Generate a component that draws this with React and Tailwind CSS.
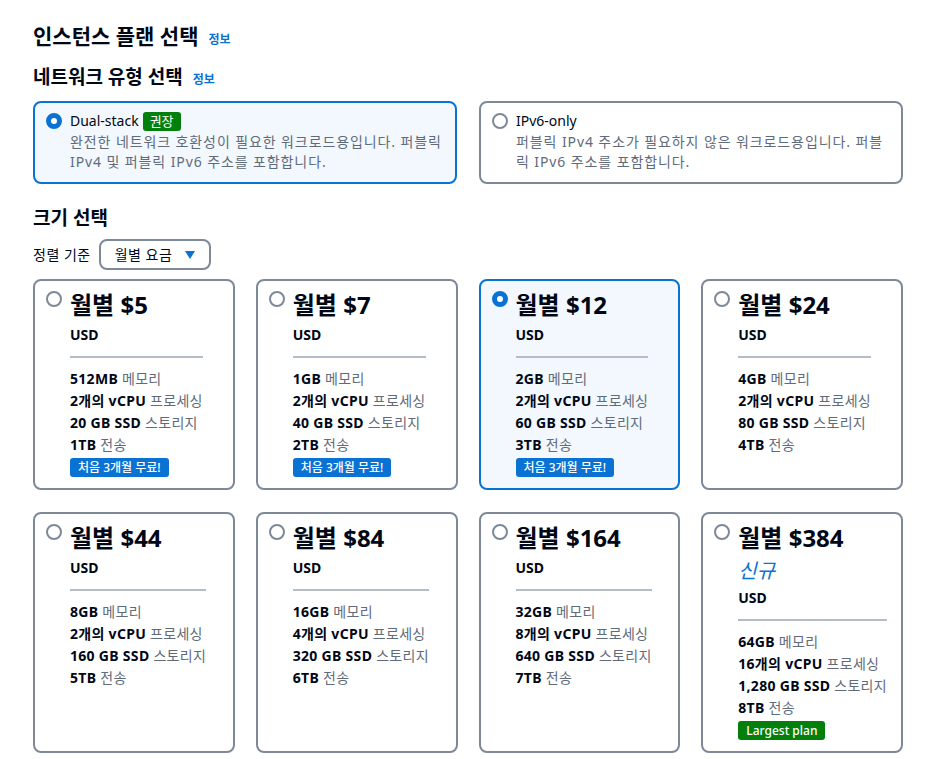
const plans = [
  { price: "$5", mem: "512MB", cpu: "2개의", ssd: "20 GB SSD", tx: "1TB", badge: "free" },
  { price: "$7", mem: "1GB", cpu: "2개의", ssd: "40 GB SSD", tx: "2TB", badge: "free" },
  { price: "$12", mem: "2GB", cpu: "2개의", ssd: "60 GB SSD", tx: "3TB", badge: "free", selected: true },
  { price: "$24", mem: "4GB", cpu: "2개의", ssd: "80 GB SSD", tx: "4TB" },
  { price: "$44", mem: "8GB", cpu: "2개의", ssd: "160 GB SSD", tx: "5TB" },
  { price: "$84", mem: "16GB", cpu: "4개의", ssd: "320 GB SSD", tx: "6TB" },
  { price: "$164", mem: "32GB", cpu: "8개의", ssd: "640 GB SSD", tx: "7TB" },
  { price: "$384", mem: "64GB", cpu: "16개의", ssd: "1,280 GB SSD", tx: "8TB", badge: "largest", isNew: true },
];

function Radio({ selected, className = "" }) {
  return (
    <span
      className={`block h-4 w-4 shrink-0 rounded-full bg-white ${
        selected ? "border-[5px] border-[#0972d3]" : "border-2 border-[#7d8998]"
      } ${className}`}
    />
  );
}

function InfoLink() {
  return <span className="ml-[10px] text-xs font-bold tracking-normal text-[#0972d3]">정보</span>;
}

function NetworkTile({ title, badge, selected, children }) {
  return (
    <div
      className={`flex rounded-lg border-2 pb-[10px] pl-[11px] pr-3 pt-[7px] ${
        selected ? "border-[#0972d3] bg-[#f2f8fd]" : "border-[#7d8998] bg-white"
      }`}
    >
      <Radio selected={selected} className="mt-[3px]" />
      <div className="ml-2">
        <div className="flex h-[22px] items-center gap-1 text-sm text-[#000716]">
          <span>{title}</span>
          {badge && (
            <span className="rounded-[3px] bg-[#037f0c] px-[7px] text-[13px] leading-[19px] text-white">
              {badge}
            </span>
          )}
        </div>
        <p className="whitespace-nowrap text-sm leading-5 tracking-[0.9px] text-[#5f6b7a]">{children}</p>
      </div>
    </div>
  );
}

function PlanCard({ p }) {
  return (
    <div
      className={`flex rounded-lg border-2 pb-[11px] pl-[11px] pr-2 pt-[8px] ${
        p.selected ? "border-[#0972d3] bg-[#f2f8fd]" : "border-[#7d8998] bg-white"
      }`}
    >
      <Radio selected={p.selected} className="mt-[2px]" />
      <div className="ml-2 w-fit">
        <div className="whitespace-nowrap text-[24px] font-bold leading-[32px] text-[#000716]">
          월별 {p.price}
        </div>
        {p.isNew && (
          <div className="mt-[3px] text-[20px] italic leading-[28px] text-[#0972d3]">신규</div>
        )}
        <div className={`${p.isNew ? "mt-[3px]" : "mt-1"} text-sm font-bold leading-5 text-[#000716]`}>
          USD
        </div>
        <div className="mt-[11px] h-[2px] bg-[#b4bdc7]" />
        <ul className="mt-[10px] whitespace-nowrap text-sm leading-[22px] tracking-[0.3px] text-[#5f6b7a]">
          <li>
            <b className="text-[#000716]">{p.mem}</b> 메모리
          </li>
          <li>
            <b className="text-[#000716]">{p.cpu} vCPU</b> 프로세싱
          </li>
          <li>
            <b className="text-[#000716]">{p.ssd}</b> 스토리지
          </li>
          <li>
            <b className="text-[#000716]">{p.tx}</b> 전송
          </li>
        </ul>
        {p.badge === "free" && (
          <div className="mt-[2px] w-fit whitespace-nowrap rounded-[3px] bg-[#0972d3] px-[8px] text-xs font-medium leading-[19px] text-white">
            처음 3개월 무료!
          </div>
        )}
        {p.badge === "largest" && (
          <div className="mt-[2px] w-fit whitespace-nowrap rounded-[3px] bg-[#037f0c] px-[8px] text-xs font-medium leading-[19px] text-white">
            Largest plan
          </div>
        )}
      </div>
    </div>
  );
}

export default function App() {
  return (
    <div className="min-h-[759px] w-[932px] bg-white pl-[33px] pr-[29px] pt-[24px] font-['Noto_Sans','Noto_Sans_CJK_KR',sans-serif] text-[#000716]">
      <h1 className="text-[21px] font-bold leading-6">
        인스턴스 플랜 선택
        <InfoLink />
      </h1>
      <h2 className="mt-[17px] text-[19px] font-bold leading-6">
        네트워크 유형 선택
        <InfoLink />
      </h2>
      <div className="mt-3 grid grid-cols-2 gap-[22px]">
        <NetworkTile title="Dual-stack" badge="권장" selected>
          완전한 네트워크 호환성이 필요한 워크로드용입니다. 퍼블릭
          <br />
          IPv4 및 퍼블릭 IPv6 주소를 포함합니다.
        </NetworkTile>
        <NetworkTile title="IPv6-only">
          퍼블릭 IPv4 주소가 필요하지 않은 워크로드용입니다. 퍼블
          <br />릭 IPv6 주소를 포함합니다.
        </NetworkTile>
      </div>
      <h2 className="mt-[22px] text-[19px] font-bold leading-6">크기 선택</h2>
      <div className="mt-[9px] flex items-center">
        <span className="text-sm tracking-[0.5px]">정렬 기준</span>
        <div className="ml-2 flex h-[31px] items-center rounded-lg border-2 border-[#7d8998] pl-[14px] pr-[14px] text-sm">
          <span className="tracking-[0.5px]">월별 요금</span>
          <svg className="ml-[13px]" width="10" height="8" viewBox="0 0 10 8">
            <path d="M0 0h10L5 8z" fill="#0972d3" />
          </svg>
        </div>
      </div>
      <div className="mt-[9px] grid grid-cols-4 gap-x-[21px] gap-y-[22px]">
        {plans.map((p) => (
          <PlanCard key={p.price} p={p} />
        ))}
      </div>
    </div>
  );
}
